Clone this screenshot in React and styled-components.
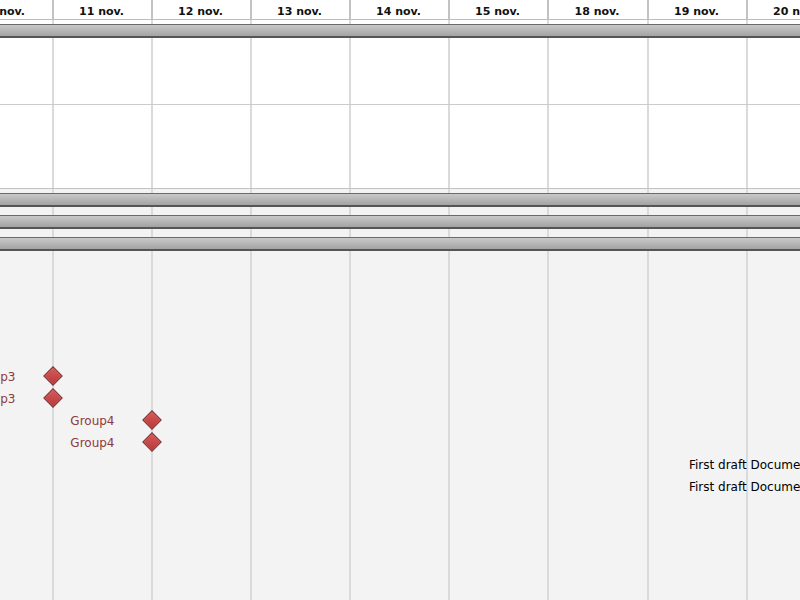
import React from 'react';
import styled, { createGlobalStyle } from 'styled-components';

const GlobalStyle = createGlobalStyle`
	html, body {
		margin: 0;
		padding: 0;
		background: #f3f3f3;
		overflow: hidden;
	}
	* {
		box-sizing: border-box;
	}
`;

//working days shown in the timeline, weekend is skipped
const days = [
	{ label: '10 nov.', width: 99 },
	{ label: '11 nov.', width: 99 },
	{ label: '12 nov.', width: 99 },
	{ label: '13 nov.', width: 99 },
	{ label: '14 nov.', width: 99 },
	{ label: '15 nov.', width: 99 },
	{ label: '18 nov.', width: 100 },
	{ label: '19 nov.', width: 99 },
	{ label: '20 nov.', width: 99 }
];

const rows = [
	{ type: 'bar' },
	{ type: 'bar' },
	{ type: 'bar' },
	{},
	{},
	{},
	{},
	{},
	{ milestone: { x: 52.5, label: 'Group3' } },
	{ milestone: { x: 52.5, label: 'Group3' } },
	{ milestone: { x: 151.5, label: 'Group4' } },
	{ milestone: { x: 151.5, label: 'Group4' } },
	{ note: { x: 689, label: 'First draft Document' } },
	{ note: { x: 689, label: 'First draft Document' } },
	{},
	{},
	{},
	{},
	{}
];

const Milestone = ({ x, label }) => (
	<MilestoneAnchor style={{ left: x }}>
		<MilestoneLabel>{label}</MilestoneLabel>
		<Diamond />
	</MilestoneAnchor>
);

const App = () => (
	<Page>
		<GlobalStyle />
		<Header>
			{days.map((d) => (
				<HeaderCell key={d.label} style={{ width: d.width }}>
					{d.label}
				</HeaderCell>
			))}
		</Header>
		<Body>
			<GridLines>
				{days.map((d) => <GridCol key={d.label} style={{ width: d.width }} />)}
			</GridLines>
			<WhitePanel>
				<Row>
					<Bar />
				</Row>
				<Block $height={62} />
				<Block $height={83} $border="#c2c2c2" />
			</WhitePanel>
			{rows.map((r, i) => (
				<Row key={i}>
					{r.type === 'bar' && <Bar />}
					{r.milestone && <Milestone {...r.milestone} />}
					{r.note && <Note style={{ left: r.note.x }}>{r.note.label}</Note>}
				</Row>
			))}
		</Body>
	</Page>
);

export default App;

const Page = styled.div`
	width: 800px;
	height: 600px;
	overflow: hidden;
	background: #f3f3f3;
	font-family: "DejaVu Sans", "Liberation Sans", sans-serif;
`;

const Header = styled.div`
	display: flex;
	margin-left: -45px;
	height: 20px;
	background: #fff;
	border-bottom: 1px solid #bdbdbd;
`;

const HeaderCell = styled.div`
	flex: none;
	height: 19px;
	padding: 5px 2px 0 0;
	border-right: 2px solid #c2c2c2;
	text-align: center;
	font-size: 11px;
	font-weight: bold;
	line-height: 13px;
	color: #111;
	white-space: nowrap;
`;

const Body = styled.div`
	position: relative;
`;

const GridLines = styled.div`
	position: absolute;
	top: 0;
	bottom: 0;
	left: -45px;
	display: flex;
	z-index: 1;
	pointer-events: none;
`;

const GridCol = styled.div`
	flex: none;
	height: 100%;
	border-right: 2px solid #dadada;
`;

const WhitePanel = styled.div`
	background: #fff;
`;

const Block = styled.div`
	height: ${(p) => p.$height + 1}px;
	border-bottom: 1px solid ${(p) => p.$border || '#cbcbcb'};
	position: relative;
	z-index: 2;
`;

const Row = styled.div`
	position: relative;
	height: 22px;
	padding-top: 4px;
`;

const Bar = styled.div`
	position: relative;
	z-index: 2;
	height: 14px;
	border-top: 1px solid #6b6b6b;
	border-bottom: 2px solid #555;
	background: linear-gradient(#c9c9c9, #a3a3a3);
`;

const MilestoneAnchor = styled.div`
	position: absolute;
	top: 0;
	width: 0;
	height: 22px;
	z-index: 2;
`;

const Diamond = styled.div`
	position: absolute;
	left: -7px;
	top: 4px;
	width: 14px;
	height: 14px;
	transform: rotate(45deg);
	background: linear-gradient(135deg, #d85a5a, #b83939);
	border: 1px solid #7a2626;
`;

const MilestoneLabel = styled.div`
	position: absolute;
	right: 37px;
	top: 5px;
	font-size: 12px;
	line-height: 14px;
	color: #8e3a3a;
	white-space: nowrap;
`;

const Note = styled.div`
	position: absolute;
	top: 5px;
	z-index: 2;
	font-size: 12px;
	line-height: 14px;
	color: #000;
	white-space: nowrap;
`;
